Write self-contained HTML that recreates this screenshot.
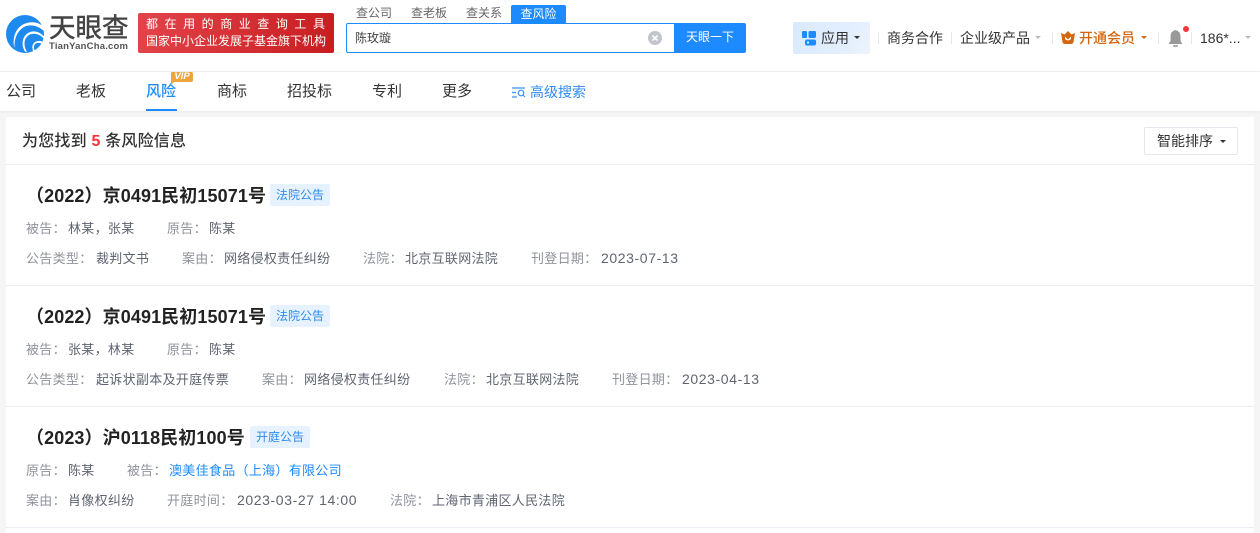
<!DOCTYPE html>
<html lang="zh"><head><meta charset="utf-8"><title>天眼查</title>
<style>
html,body{margin:0;padding:0}
body{width:1260px;height:533px;overflow:hidden;position:relative;background:#f5f5f5;font-family:"Liberation Sans","Noto Sans CJK SC",sans-serif;color:#333}
.a{position:absolute;white-space:nowrap}
#top{left:0;top:0;width:1260px;height:71px;background:#fff;box-shadow:0 1px 3px rgba(0,0,0,.06)}
#nav{left:0;top:72px;width:1260px;height:39px;background:#fff;box-shadow:0 1px 2px rgba(0,0,0,.06)}
#card{left:6px;top:117px;width:1248px;height:416px;background:#fff}
.n{font-size:15px;line-height:20px;top:82px;color:#333}
.t{font-size:12px;line-height:14px;top:6px;color:#666}
.h{font-size:14px;line-height:18px;top:29px;color:#333}
.sep{width:1px;height:12px;background:#e8e8e8;top:32px}
.ln{left:6px;width:1248px;height:1px;background:#eceef3}
.ttl{font-size:18px;font-weight:700;line-height:24px;color:#222;letter-spacing:.1px}
.tag{height:22px;line-height:22px;font-size:12px;background:#e6f2ff;color:#2e8bf0;border-radius:2px;text-align:center}
.m{font-size:13px;line-height:18px;color:#5f6470;letter-spacing:.3px}
.l{font-size:13px;line-height:18px;color:#8f939b;letter-spacing:.3px}
.d{font-size:14px;letter-spacing:.6px;margin-top:-1px}
.ar{border:3px solid transparent;border-bottom:0;top:36px}
</style></head><body>
<div class="a" id="top"></div>
<svg class="a" style="left:6px;top:15px" width="38" height="38" viewBox="0 0 38 38">
<circle cx="19" cy="19" r="19" fill="#1e8af0"/>
<path d="M8.500 33C8 24 11 16 18 12C24 9 31 10 38 16L38 12C32 6.500 24 6 17 9.500C9 14 6 24 8.500 33Z" fill="#fff"/>
<path d="M21 37C17 30 18 23 23 20C28 17.500 34 19 38 24L38 21.500C33 16 27 15 22 18C16 22 15 30 19 36.500Z" fill="#fff"/>
<path d="M29 36C27 32 28 29 31 28C33 27.500 35 28 37 29.500L37.500 27.500C35 25.500 32 25.500 29 27C26 29 25.500 33 27.500 36.700Z" fill="#fff"/>
</svg>
<div class="a" style="left:49px;top:13px;font-size:26.500px;line-height:30px;font-weight:400;color:#444;letter-spacing:0;-webkit-text-stroke:.5px #444">天眼查</div>
<div class="a" style="left:49px;top:41px;font-size:9.500px;line-height:11px;font-weight:700;color:#555;letter-spacing:.2px">TianYanCha.com</div>
<div class="a" style="left:138px;top:13px;width:196px;height:40px;border-radius:2px;background:linear-gradient(100deg,#e3444a,#c71d20)"></div>
<div class="a" style="left:146px;top:15px;color:#fff;font-size:12px;line-height:18px;letter-spacing:6.550px">都在用的商业查询工具</div>
<div class="a" style="left:146px;top:32px;color:#fff;font-size:12px;line-height:18px;letter-spacing:0">国家中小企业发展子基金旗下机构</div>

<div class="a t" style="left:356px">查公司</div>
<div class="a t" style="left:411px">查老板</div>
<div class="a t" style="left:466px">查关系</div>
<div class="a" style="left:511px;top:5px;width:55px;height:18px;background:#1e8aff;border-radius:2px 2px 0 0;color:#fff;font-size:12px;line-height:18px;text-align:center">查风险</div>
<div class="a" style="left:346px;top:23px;width:328px;height:28px;border:1px solid #1e8aff;border-right:0;border-radius:2px 0 0 2px;background:#fff"></div>
<div class="a" style="left:355px;top:30px;font-size:12px;line-height:17px;color:#444">陈玫璇</div>
<svg class="a" style="left:648px;top:31px" width="14" height="14" viewBox="0 0 14 14"><circle cx="7" cy="7" r="7" fill="#c2c5cc"/><path d="M4.500 4.500L9.500 9.500M9.500 4.500L4.500 9.500" stroke="#fff" stroke-width="1.600"/></svg>
<div class="a" style="left:674px;top:23px;width:72px;height:30px;background:#1e8aff;border-radius:0 2px 2px 0;color:#fff;font-size:12px;line-height:29px;text-align:center">天眼一下</div>

<div class="a" style="left:793px;top:22px;width:77px;height:32px;border-radius:2px;background:linear-gradient(120deg,#d9eafe,#e3effd 70%,#eef4fb)"></div>
<svg class="a" style="left:802px;top:31px" width="14" height="15" viewBox="0 0 14 15"><rect x="0" y="0" width="5" height="7" rx="1.300" fill="#1e8aff"/><rect x="6.500" y="0" width="7.500" height="7" rx="1.500" fill="#1e8aff"/><rect x="3" y="8.500" width="11" height="6" rx="2" fill="#1e8aff"/><rect x="5" y="10.500" width="2" height="2" fill="#d9eafe"/></svg>
<div class="a h" style="left:821px">应用</div>
<div class="a ar" style="left:854px;border-top-color:#333"></div>
<div class="a sep" style="left:878px"></div>
<div class="a h" style="left:887px">商务合作</div>
<div class="a sep" style="left:951px"></div>
<div class="a h" style="left:960px">企业级产品</div>
<div class="a ar" style="left:1035px;border-top-color:#bbb"></div>
<div class="a sep" style="left:1052px"></div>
<svg class="a" style="left:1061px;top:31px" width="14" height="13" viewBox="0 0 14 13"><path d="M0 2L3.500 3.500L7 0L10.500 3.500L14 2L12.500 11Q12 13 10 13H4Q2 13 1.500 11Z" fill="#d4660f"/><path d="M4 5.500L7 8.500L10 5.500L10 8Q7 11 4 8Z" fill="#fff"/></svg>
<div class="a h" style="left:1079px;color:#d4660f;font-weight:500">开通会员</div>
<div class="a ar" style="left:1141px;border-top-color:#d4660f"></div>
<div class="a sep" style="left:1158px"></div>
<svg class="a" style="left:1168px;top:30px" width="15" height="17" viewBox="0 0 15 17"><path d="M7.500 0Q12.500 1 12.500 7V11L14.500 14H.5L2.500 11V7Q2.500 1 7.500 0Z" fill="#999"/><rect x="5" y="15" width="5" height="2" rx="1" fill="#aaa"/></svg>
<div class="a" style="left:1183px;top:26px;width:6px;height:6px;border-radius:3px;background:#f5363b"></div>
<div class="a sep" style="left:1191px"></div>
<div class="a" style="left:1200px;top:29px;font-size:14px;line-height:18px;color:#333">186*...</div>
<div class="a ar" style="left:1245px;border-top-color:#bbb"></div>

<div class="a" id="nav"></div>
<div class="a n" style="left:6px">公司</div>
<div class="a n" style="left:76px">老板</div>
<div class="a n" style="left:146px;color:#1e8aff;font-weight:500">风险</div>
<div class="a" style="left:146px;top:109px;width:31px;height:2px;background:#1e8aff"></div>
<div class="a" style="left:171px;top:72px;width:22px;height:10px;background:#eea53e;border-radius:1px 2px 2px 0;color:#fff;font-size:9.500px;line-height:10px;font-weight:700;font-style:italic;text-align:center">VIP</div>
<div class="a" style="left:171px;top:82px;border-top:3px solid #eea53e;border-right:3px solid transparent"></div>
<div class="a n" style="left:217px">商标</div>
<div class="a n" style="left:287px">招投标</div>
<div class="a n" style="left:372px">专利</div>
<div class="a n" style="left:442px">更多</div>
<svg class="a" style="left:512px;top:87px" width="14" height="11" viewBox="0 0 14 11" fill="none" stroke="#3a94f5" stroke-width="1.200"><path d="M0 1H13M0 5.500H4M0 10H5"/><circle cx="9" cy="6" r="2.800"/><path d="M11 8L13 10"/></svg>
<div class="a" style="left:530px;top:83px;font-size:14px;line-height:19px;color:#2e8bf5">高级搜索</div>

<div class="a" id="card"></div>
<div class="a" style="left:22px;top:131px;font-size:16px;line-height:22px;color:#333;font-weight:500;letter-spacing:.2px">为您找到 <span style="color:#f5363b;font-weight:700">5</span> 条风险信息</div>
<div class="a" style="left:1144px;top:127px;width:92px;height:26px;border:1px solid #e4e7ec;border-radius:2px;background:#fff"></div>
<div class="a" style="left:1157px;top:132px;font-size:14px;line-height:18px;color:#333">智能排序</div>
<div class="a ar" style="left:1220px;top:140px;border-top-color:#333"></div>
<div class="a ln" style="top:164px"></div>

<div class="a ttl" style="left:26px;top:184px">（2022）京0491民初15071号</div>
<div class="a tag" style="left:270px;top:184px;width:60px">法院公告</div>
<div class="a l" style="left:26px;top:220px">被告：</div><div class="a m" style="left:68px;top:220px">林某，张某</div>
<div class="a l" style="left:167px;top:220px">原告：</div><div class="a m" style="left:209px;top:220px">陈某</div>
<div class="a l" style="left:26px;top:250px">公告类型：</div><div class="a m" style="left:96px;top:250px">裁判文书</div>
<div class="a l" style="left:182px;top:250px">案由：</div><div class="a m" style="left:224px;top:250px">网络侵权责任纠纷</div>
<div class="a l" style="left:363px;top:250px">法院：</div><div class="a m" style="left:405px;top:250px">北京互联网法院</div>
<div class="a l" style="left:531px;top:250px">刊登日期：</div><div class="a m d" style="left:601px;top:250px">2023-07-13</div>
<div class="a ln" style="top:285px"></div>

<div class="a ttl" style="left:26px;top:305px">（2022）京0491民初15071号</div>
<div class="a tag" style="left:270px;top:305px;width:60px">法院公告</div>
<div class="a l" style="left:26px;top:341px">被告：</div><div class="a m" style="left:68px;top:341px">张某，林某</div>
<div class="a l" style="left:167px;top:341px">原告：</div><div class="a m" style="left:209px;top:341px">陈某</div>
<div class="a l" style="left:26px;top:371px">公告类型：</div><div class="a m" style="left:96px;top:371px">起诉状副本及开庭传票</div>
<div class="a l" style="left:262px;top:371px">案由：</div><div class="a m" style="left:304px;top:371px">网络侵权责任纠纷</div>
<div class="a l" style="left:444px;top:371px">法院：</div><div class="a m" style="left:486px;top:371px">北京互联网法院</div>
<div class="a l" style="left:612px;top:371px">刊登日期：</div><div class="a m d" style="left:682px;top:371px">2023-04-13</div>
<div class="a ln" style="top:406px"></div>

<div class="a ttl" style="left:26px;top:426px">（2023）沪0118民初100号</div>
<div class="a tag" style="left:250px;top:426px;width:60px">开庭公告</div>
<div class="a l" style="left:26px;top:462px">原告：</div><div class="a m" style="left:68px;top:462px">陈某</div>
<div class="a l" style="left:127px;top:462px">被告：</div><div class="a m" style="left:169px;top:462px;color:#1e8aff">澳美佳食品（上海）有限公司</div>
<div class="a l" style="left:26px;top:492px">案由：</div><div class="a m" style="left:68px;top:492px">肖像权纠纷</div>
<div class="a l" style="left:167px;top:492px">开庭时间：</div><div class="a m d" style="left:237px;top:492px">2023-03-27 14:00</div>
<div class="a l" style="left:390px;top:492px">法院：</div><div class="a m" style="left:432px;top:492px">上海市青浦区人民法院</div>
<div class="a ln" style="top:527px"></div>
</body></html>
